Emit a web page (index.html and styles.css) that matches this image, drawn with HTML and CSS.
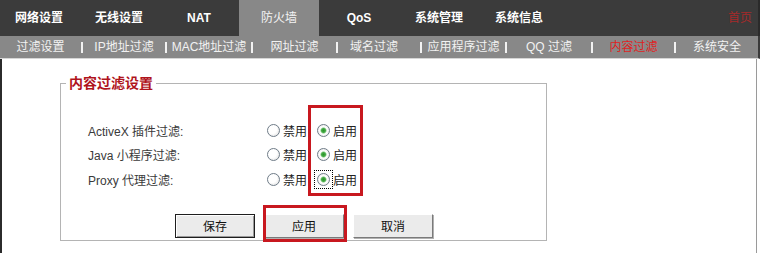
FILE: index.html
```html
<!DOCTYPE html>
<html>
<head>
<meta charset="UTF-8">
<link rel="stylesheet" href="styles.css">
</head>
<body>

<div class="topnav">
	<a class="tab">网络设置</a>
	<a class="tab">无线设置</a>
	<a class="tab">NAT</a>
	<a class="tab tab-active">防火墙</a>
	<a class="tab">QoS</a>
	<a class="tab">系统管理</a>
	<a class="tab">系统信息</a>
	<a class="home">首页</a>
</div>

<div class="subnav">
	<a class="sub">过滤设置</a><span class="sep"></span>
	<a class="sub">IP地址过滤</a><span class="sep"></span>
	<a class="sub">MAC地址过滤</a><span class="sep"></span>
	<a class="sub">网址过滤</a><span class="sep"></span>
	<a class="sub sub-left">域名过滤</a><span class="sep"></span>
	<a class="sub">应用程序过滤</a><span class="sep"></span>
	<a class="sub">QQ 过滤</a><span class="sep"></span>
	<a class="sub sub-active">内容过滤</a><span class="sep"></span>
	<a class="sub">系统安全</a>
</div>

<div class="content">
	<form class="panel">
		<fieldset class="box">
			<legend>内容过滤设置</legend>
			<div class="rows">
				<div class="row">
					<span class="label">ActiveX 插件过滤:</span>
					<label class="opt"><span class="ring"><input type="radio" name="activex"></span>禁用</label>
					<label class="opt"><span class="ring"><input type="radio" name="activex" checked></span>启用</label>
				</div>
				<div class="row">
					<span class="label">Java 小程序过滤:</span>
					<label class="opt"><span class="ring"><input type="radio" name="java"></span>禁用</label>
					<label class="opt"><span class="ring"><input type="radio" name="java" checked></span>启用</label>
				</div>
				<div class="row">
					<span class="label">Proxy 代理过滤:</span>
					<label class="opt"><span class="ring"><input type="radio" name="proxy"></span>禁用</label>
					<label class="opt"><span class="ring ring-focus"><input type="radio" name="proxy" checked></span>启用</label>
				</div>
			</div>
			<div class="actions">
				<button type="button" class="btn btn-default">保存</button>
				<button type="button" class="btn">应用</button>
				<button type="button" class="btn">取消</button>
			</div>
		</fieldset>
		<!-- red highlight marks drawn over the form -->
		<div class="mark mark-col"></div>
		<div class="mark mark-btn"></div>
	</form>
</div>

</body>
</html>
```

FILE: styles.css
```css
* {
	box-sizing: border-box;
}

body {
	margin: 0;
	width: 760px;
	height: 253px;
	overflow: hidden;
	font-family: "Liberation Sans", "Noto Sans CJK SC", sans-serif;
	font-size: 12px;
	background: #ffffff;
}

/* top menu */
.topnav {
	display: flex;
	height: 36px;
	background-color: #3b3b3b;
	border-right: 2px solid #2a2a2a;
}

.tab {
	width: 80px;
	line-height: 36px;
	text-align: center;
	color: #ffffff;
	font-weight: bold;
	font-size: 12px;
}

.tab:first-child {
	margin-left: -1px;
}

.tab-active {
	background-color: #888888;
	font-weight: normal;
	color: #f4f4f4;
}

.home {
	margin-left: auto;
	margin-right: 6px;
	line-height: 36px;
	color: #a52a2a;
}

/* second menu */
.subnav {
	display: grid;
	grid-template-columns: 81px 2px 82px 2px 84px 2px 83px 2px 82px 2px 83px 2px 84px 2px 81px 2px 82px;
	align-items: center;
	height: 23px;
	background-color: #888888;
	border-bottom: 1px solid #d6d6d6;
	border-right: 2px solid #3a3a3a;
}

.sub {
	text-align: center;
	color: #f2f2f2;
	line-height: 23px;
	white-space: nowrap;
}

.sub-left {
	padding-right: 10px;
}

.sub-active {
	color: #e02222;
}

.sep {
	height: 11px;
	background-color: #f2f2f2;
}

/* page body */
.content {
	height: 194px;
	padding: 16px 0 0 58px;
	border-left: 2px solid #2b2b2b;
	border-right: 1px solid #9a9a9a;
	margin-right: 3px;
}

.panel {
	position: relative;
	width: 487px;
}

.box {
	margin: 0;
	padding: 0 0 2px 0;
	border: 1px solid #b4b4b4;
}

.box legend {
	margin-left: 5px;
	padding: 0 3px;
	font-size: 14px;
	line-height: 16px;
	font-weight: bold;
	color: #b0141c;
}

.rows {
	padding: 27px 0 0 27px;
}

.row {
	display: flex;
	align-items: center;
	height: 24.5px;
	color: #3a3a3a;
}

.label {
	width: 179px;
}

.opt {
	display: flex;
	align-items: center;
	width: 50px;
	color: #222222;
}

.ring {
	display: flex;
	margin-right: 3px;
}

.ring-focus {
	outline: 1px dotted #000000;
	outline-offset: 2px;
}

.ring input {
	appearance: none;
	-webkit-appearance: none;
	width: 13px;
	height: 13px;
	margin: 0;
	border: 1px solid #6f7c88;
	border-radius: 50%;
	background: radial-gradient(circle at 40% 40%, #ffffff 45%, #d8d8d8 100%);
}

.ring input:checked {
	background: radial-gradient(circle, #2a932a 0, #45ab45 2px, #ffffff 3.5px, #e0e0e0 100%);
}

.actions {
	display: flex;
	gap: 9px;
	margin-top: 22px;
	padding-left: 114px;
}

.btn {
	width: 80px;
	height: 24px;
	padding: 0;
	font-family: "Liberation Sans", "Noto Sans CJK SC", sans-serif;
	font-size: 12px;
	color: #111111;
	background-color: #ebebeb;
	border: 1px solid;
	border-color: #ffffff #7a7a7a #7a7a7a #ffffff;
	box-shadow: 1px 1px 0 #b0b0b0;
}

.btn-default {
	border: 1px solid #1e1e1e;
	box-shadow: inset 1px 1px 0 #ffffff, inset -1px -1px 0 #9a9a9a;
}

/* red highlight marks */
.mark {
	position: absolute;
	border: 3px solid #c8181f;
}

.mark-col {
	left: 248px;
	top: 30px;
	width: 55px;
	height: 91px;
}

.mark-btn {
	left: 203px;
	top: 130px;
	width: 84px;
	height: 37px;
}
```
